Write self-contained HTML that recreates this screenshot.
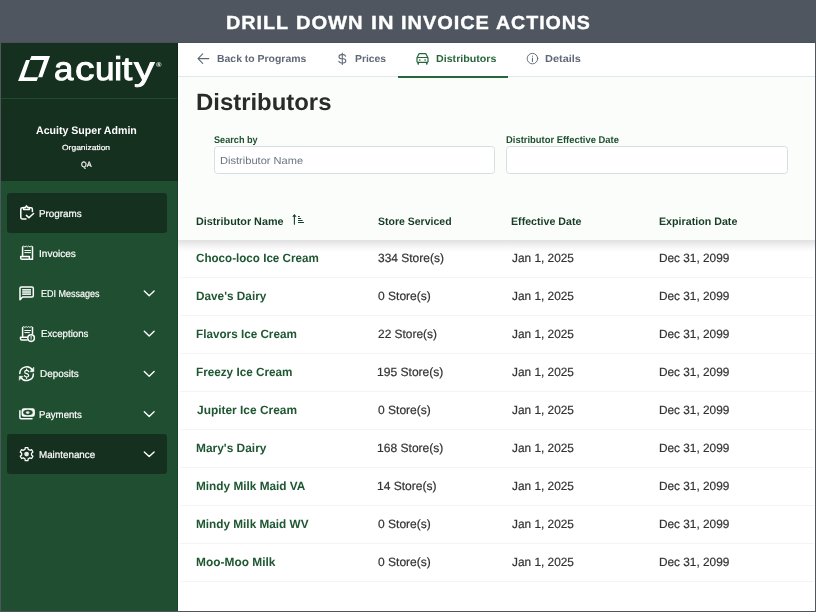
<!DOCTYPE html>
<html><head><meta charset="utf-8"><title>Distributors</title>
<style>
html,body{margin:0;padding:0}
body{width:816px;height:612px;position:relative;overflow:hidden;background:#4f5660;font-family:"Liberation Sans",sans-serif;text-rendering:geometricPrecision}
.b{position:absolute;box-sizing:border-box}
.t{position:absolute;white-space:nowrap;display:inline-block;transform-origin:0 50%}
svg{position:absolute;overflow:visible}
</style></head><body>
<div class="b" style="left:0px;top:0px;width:816px;height:43px;background:#4f5660;"></div>
<div class="b" style="left:0px;top:42px;width:816px;height:1px;background:#4b515b;"></div>
<div class="b" style="left:0px;top:43px;width:816px;height:569px;background:#4f5660;"></div>
<div class="b" style="left:1px;top:43px;width:814px;height:568px;background:#ffffff;"></div>
<div class="b" style="left:180px;top:77px;width:635px;height:164px;background:#fbfdfb;"></div>
<div class="b" style="left:178px;top:76px;width:637px;height:1px;background:#e3e6eb;"></div>
<div class="b" style="left:398px;top:75.5px;width:110px;height:2px;background:#27663b;"></div>
<div class="b" style="left:178px;top:240px;width:637px;height:12px;background:transparent;background:linear-gradient(to bottom,rgba(0,0,0,0.105) 0,rgba(0,0,0,0.10) 2px,rgba(0,0,0,0.06) 5px,rgba(0,0,0,0.028) 8px,rgba(0,0,0,0.006) 11px,rgba(0,0,0,0) 12px);"></div>
<div class="b" style="left:180px;top:277px;width:634px;height:1px;background:#f3f4f3;"></div>
<div class="b" style="left:180px;top:315px;width:634px;height:1px;background:#f3f4f3;"></div>
<div class="b" style="left:180px;top:353px;width:634px;height:1px;background:#f3f4f3;"></div>
<div class="b" style="left:180px;top:391px;width:634px;height:1px;background:#f3f4f3;"></div>
<div class="b" style="left:180px;top:429px;width:634px;height:1px;background:#f3f4f3;"></div>
<div class="b" style="left:180px;top:467px;width:634px;height:1px;background:#f3f4f3;"></div>
<div class="b" style="left:180px;top:505px;width:634px;height:1px;background:#f3f4f3;"></div>
<div class="b" style="left:180px;top:543px;width:634px;height:1px;background:#f3f4f3;"></div>
<div class="b" style="left:180px;top:581px;width:634px;height:1px;background:#f3f4f3;"></div>
<div class="b" style="left:214px;top:146px;width:281px;height:28px;background:#fff;border:1px solid #d9dde2;border-radius:3.5px;"></div>
<div class="b" style="left:506px;top:146px;width:282px;height:28px;background:#fff;border:1px solid #d9dde2;border-radius:3.5px;"></div>
<div class="b" style="left:1px;top:43px;width:177px;height:568px;background:#204e30;"></div>
<div class="b" style="left:1px;top:43px;width:177px;height:138px;background:#163020;"></div>
<div class="b" style="left:1px;top:98px;width:177px;height:1px;background:#1f4a2e;"></div>
<div class="b" style="left:177px;top:43px;width:1px;height:568px;background:#1a4429;"></div>
<div class="b" style="left:177px;top:43px;width:1px;height:138px;background:#0c2a18;"></div>
<div class="b" style="left:7px;top:193px;width:159.5px;height:40px;background:#163020;border-radius:3px;"></div>
<div class="b" style="left:7px;top:434px;width:159.5px;height:40px;background:#163020;border-radius:3px;"></div>
<div class="b" style="left:0;top:0;width:816px;height:612px;will-change:transform">
<span class="t" style="left:226.22px;top:13px;line-height:21px;font-size:18.9px;color:#fff;transform:scaleX(1.0470);font-weight:700;-webkit-text-stroke:0.35px #fff;letter-spacing:0.9px;">DRILL</span>
<span class="t" style="left:296.04px;top:13px;line-height:21px;font-size:18.9px;color:#fff;transform:scaleX(1.0642);font-weight:700;-webkit-text-stroke:0.35px #fff;letter-spacing:0.9px;">DOWN</span>
<span class="t" style="left:370.75px;top:13px;line-height:21px;font-size:18.9px;color:#fff;transform:scaleX(1.1391);font-weight:700;-webkit-text-stroke:0.35px #fff;letter-spacing:0.9px;">IN</span>
<span class="t" style="left:400.95px;top:13px;line-height:21px;font-size:18.9px;color:#fff;transform:scaleX(1.0578);font-weight:700;-webkit-text-stroke:0.35px #fff;letter-spacing:0.9px;">INVOICE</span>
<span class="t" style="left:496.16px;top:13px;line-height:21px;font-size:18.9px;color:#fff;transform:scaleX(1.0392);font-weight:700;-webkit-text-stroke:0.35px #fff;letter-spacing:0.9px;">ACTIONS</span>
<span class="t" style="left:54.36px;top:50px;line-height:37px;font-size:33.0px;color:#fff;transform:scaleX(1.0567);-webkit-text-stroke:0.9px #fff;">a</span>
<span class="t" style="left:75.07px;top:50px;line-height:37px;font-size:33.0px;color:#fff;transform:scaleX(1.1857);-webkit-text-stroke:0.9px #fff;">c</span>
<span class="t" style="left:95.06px;top:50px;line-height:37px;font-size:33.0px;color:#fff;transform:scaleX(1.0643);-webkit-text-stroke:0.9px #fff;">u</span>
<span class="t" style="left:114.41px;top:50px;line-height:37px;font-size:33.0px;color:#fff;transform:scaleX(1.1273);-webkit-text-stroke:0.9px #fff;">i</span>
<span class="t" style="left:122.39px;top:50px;line-height:37px;font-size:33.0px;color:#fff;transform:scaleX(1.1294);-webkit-text-stroke:0.9px #fff;">t</span>
<span class="t" style="left:134.24px;top:50px;line-height:37px;font-size:33.0px;color:#fff;transform:scaleX(1.2369);-webkit-text-stroke:0.9px #fff;">y</span>
<span class="t" style="left:156.20px;top:62px;line-height:7px;font-size:7px;color:#fff;transform:scaleX(1.0000);font-weight:700;">®</span>
<span class="t" style="left:36.16px;top:125px;line-height:12px;font-size:10.9px;color:#fff;transform:scaleX(0.9723);font-weight:700;">Acuity Super Admin</span>
<span class="t" style="left:62.41px;top:143px;line-height:9px;font-size:7.4px;color:#fff;transform:scaleX(1.1467);-webkit-text-stroke:0.2px #fff;">Organization</span>
<span class="t" style="left:81.06px;top:160px;line-height:9px;font-size:7.8px;color:#fff;transform:scaleX(0.9409);-webkit-text-stroke:0.2px #fff;">QA</span>
<span class="t" style="left:39.06px;top:209px;line-height:11px;font-size:10.0px;color:#fff;transform:scaleX(0.9846);-webkit-text-stroke:0.2px #fff;">Programs</span>
<span class="t" style="left:38.80px;top:249px;line-height:11px;font-size:10.0px;color:#fff;transform:scaleX(1.0043);-webkit-text-stroke:0.2px #fff;">Invoices</span>
<span class="t" style="left:40.73px;top:289px;line-height:11px;font-size:10.0px;color:#fff;transform:scaleX(0.8984);-webkit-text-stroke:0.2px #fff;">EDI Messages</span>
<span class="t" style="left:40.67px;top:329px;line-height:11px;font-size:10.0px;color:#fff;transform:scaleX(0.9696);-webkit-text-stroke:0.2px #fff;">Exceptions</span>
<span class="t" style="left:40.15px;top:369px;line-height:11px;font-size:10.0px;color:#fff;transform:scaleX(0.9934);-webkit-text-stroke:0.2px #fff;">Deposits</span>
<span class="t" style="left:39.38px;top:410px;line-height:11px;font-size:10.0px;color:#fff;transform:scaleX(0.9642);-webkit-text-stroke:0.2px #fff;">Payments</span>
<span class="t" style="left:39.26px;top:450px;line-height:11px;font-size:10.0px;color:#fff;transform:scaleX(0.9804);-webkit-text-stroke:0.2px #fff;">Maintenance</span>
<span class="t" style="left:216.58px;top:54px;line-height:11px;font-size:10.2px;color:#5f6876;transform:scaleX(1.0243);font-weight:700;">Back to Programs</span>
<span class="t" style="left:355.24px;top:54px;line-height:11px;font-size:10.2px;color:#5f6876;transform:scaleX(1.0169);font-weight:700;">Prices</span>
<span class="t" style="left:435.81px;top:54px;line-height:11px;font-size:10.2px;color:#27663b;transform:scaleX(1.0467);font-weight:700;">Distributors</span>
<span class="t" style="left:544.99px;top:54px;line-height:11px;font-size:10.2px;color:#5f6876;transform:scaleX(1.0760);font-weight:700;">Details</span>
<span class="t" style="left:196.27px;top:89px;line-height:26px;font-size:23.5px;color:#2a2a2a;transform:scaleX(1.0172);font-weight:700;">Distributors</span>
<span class="t" style="left:213.57px;top:135px;line-height:11px;font-size:9.8px;color:#1f5130;transform:scaleX(0.9333);font-weight:700;">Search by</span>
<span class="t" style="left:506.28px;top:135px;line-height:11px;font-size:9.8px;color:#1f5130;transform:scaleX(0.9605);font-weight:700;">Distributor Effective Date</span>
<span class="t" style="left:219.59px;top:156px;line-height:11px;font-size:10.3px;color:#6b7280;transform:scaleX(1.0763);">Distributor Name</span>
<span class="t" style="left:196.25px;top:216px;line-height:12px;font-size:10.8px;color:#173d26;transform:scaleX(0.9988);font-weight:700;">Distributor Name</span>
<span class="t" style="left:377.96px;top:216px;line-height:12px;font-size:10.8px;color:#173d26;transform:scaleX(0.9726);font-weight:700;">Store Serviced</span>
<span class="t" style="left:511.06px;top:216px;line-height:12px;font-size:10.8px;color:#173d26;transform:scaleX(0.9851);font-weight:700;">Effective Date</span>
<span class="t" style="left:659.36px;top:216px;line-height:12px;font-size:10.8px;color:#173d26;transform:scaleX(0.9891);font-weight:700;">Expiration Date</span>
<span class="t" style="left:196.32px;top:251px;line-height:14px;font-size:12.0px;color:#1f5732;transform:scaleX(0.9689);font-weight:700;">Choco-loco Ice Cream</span>
<span class="t" style="left:377.80px;top:251px;line-height:14px;font-size:12.0px;color:#333333;transform:scaleX(0.9977);-webkit-text-stroke:0.2px #333333;">334 Store(s)</span>
<span class="t" style="left:511.75px;top:251px;line-height:14px;font-size:12.0px;color:#333333;transform:scaleX(0.9871);-webkit-text-stroke:0.2px #333333;">Jan 1, 2025</span>
<span class="t" style="left:659.12px;top:251px;line-height:14px;font-size:12.0px;color:#333333;transform:scaleX(0.9849);-webkit-text-stroke:0.2px #333333;">Dec 31, 2099</span>
<span class="t" style="left:196.06px;top:289px;line-height:14px;font-size:12.0px;color:#1f5732;transform:scaleX(0.9823);font-weight:700;">Dave&#x27;s Dairy</span>
<span class="t" style="left:377.80px;top:289px;line-height:14px;font-size:12.0px;color:#333333;transform:scaleX(1.0019);-webkit-text-stroke:0.2px #333333;">0 Store(s)</span>
<span class="t" style="left:511.75px;top:289px;line-height:14px;font-size:12.0px;color:#333333;transform:scaleX(0.9871);-webkit-text-stroke:0.2px #333333;">Jan 1, 2025</span>
<span class="t" style="left:659.12px;top:289px;line-height:14px;font-size:12.0px;color:#333333;transform:scaleX(0.9849);-webkit-text-stroke:0.2px #333333;">Dec 31, 2099</span>
<span class="t" style="left:196.07px;top:327px;line-height:14px;font-size:12.0px;color:#1f5732;transform:scaleX(0.9755);font-weight:700;">Flavors Ice Cream</span>
<span class="t" style="left:377.80px;top:327px;line-height:14px;font-size:12.0px;color:#333333;transform:scaleX(0.9940);-webkit-text-stroke:0.2px #333333;">22 Store(s)</span>
<span class="t" style="left:511.75px;top:327px;line-height:14px;font-size:12.0px;color:#333333;transform:scaleX(0.9871);-webkit-text-stroke:0.2px #333333;">Jan 1, 2025</span>
<span class="t" style="left:659.12px;top:327px;line-height:14px;font-size:12.0px;color:#333333;transform:scaleX(0.9849);-webkit-text-stroke:0.2px #333333;">Dec 31, 2099</span>
<span class="t" style="left:196.07px;top:365px;line-height:14px;font-size:12.0px;color:#1f5732;transform:scaleX(0.9763);font-weight:700;">Freezy Ice Cream</span>
<span class="t" style="left:377.29px;top:365px;line-height:14px;font-size:12.0px;color:#333333;transform:scaleX(1.0054);-webkit-text-stroke:0.2px #333333;">195 Store(s)</span>
<span class="t" style="left:511.75px;top:365px;line-height:14px;font-size:12.0px;color:#333333;transform:scaleX(0.9871);-webkit-text-stroke:0.2px #333333;">Jan 1, 2025</span>
<span class="t" style="left:659.12px;top:365px;line-height:14px;font-size:12.0px;color:#333333;transform:scaleX(0.9849);-webkit-text-stroke:0.2px #333333;">Dec 31, 2099</span>
<span class="t" style="left:196.55px;top:403px;line-height:14px;font-size:12.0px;color:#1f5732;transform:scaleX(0.9935);font-weight:700;">Jupiter Ice Cream</span>
<span class="t" style="left:377.80px;top:403px;line-height:14px;font-size:12.0px;color:#333333;transform:scaleX(1.0019);-webkit-text-stroke:0.2px #333333;">0 Store(s)</span>
<span class="t" style="left:511.75px;top:403px;line-height:14px;font-size:12.0px;color:#333333;transform:scaleX(0.9871);-webkit-text-stroke:0.2px #333333;">Jan 1, 2025</span>
<span class="t" style="left:659.12px;top:403px;line-height:14px;font-size:12.0px;color:#333333;transform:scaleX(0.9849);-webkit-text-stroke:0.2px #333333;">Dec 31, 2099</span>
<span class="t" style="left:196.06px;top:441px;line-height:14px;font-size:12.0px;color:#1f5732;transform:scaleX(0.9929);font-weight:700;">Mary&#x27;s Dairy</span>
<span class="t" style="left:377.29px;top:441px;line-height:14px;font-size:12.0px;color:#333333;transform:scaleX(1.0054);-webkit-text-stroke:0.2px #333333;">168 Store(s)</span>
<span class="t" style="left:511.75px;top:441px;line-height:14px;font-size:12.0px;color:#333333;transform:scaleX(0.9871);-webkit-text-stroke:0.2px #333333;">Jan 1, 2025</span>
<span class="t" style="left:659.12px;top:441px;line-height:14px;font-size:12.0px;color:#333333;transform:scaleX(0.9849);-webkit-text-stroke:0.2px #333333;">Dec 31, 2099</span>
<span class="t" style="left:196.06px;top:479px;line-height:14px;font-size:12.0px;color:#1f5732;transform:scaleX(0.9845);font-weight:700;">Mindy Milk Maid VA</span>
<span class="t" style="left:377.30px;top:479px;line-height:14px;font-size:12.0px;color:#333333;transform:scaleX(1.0026);-webkit-text-stroke:0.2px #333333;">14 Store(s)</span>
<span class="t" style="left:511.75px;top:479px;line-height:14px;font-size:12.0px;color:#333333;transform:scaleX(0.9871);-webkit-text-stroke:0.2px #333333;">Jan 1, 2025</span>
<span class="t" style="left:659.12px;top:479px;line-height:14px;font-size:12.0px;color:#333333;transform:scaleX(0.9849);-webkit-text-stroke:0.2px #333333;">Dec 31, 2099</span>
<span class="t" style="left:196.06px;top:517px;line-height:14px;font-size:12.0px;color:#1f5732;transform:scaleX(0.9811);font-weight:700;">Mindy Milk Maid WV</span>
<span class="t" style="left:377.80px;top:517px;line-height:14px;font-size:12.0px;color:#333333;transform:scaleX(1.0019);-webkit-text-stroke:0.2px #333333;">0 Store(s)</span>
<span class="t" style="left:511.75px;top:517px;line-height:14px;font-size:12.0px;color:#333333;transform:scaleX(0.9871);-webkit-text-stroke:0.2px #333333;">Jan 1, 2025</span>
<span class="t" style="left:659.12px;top:517px;line-height:14px;font-size:12.0px;color:#333333;transform:scaleX(0.9849);-webkit-text-stroke:0.2px #333333;">Dec 31, 2099</span>
<span class="t" style="left:196.06px;top:555px;line-height:14px;font-size:12.0px;color:#1f5732;transform:scaleX(0.9931);font-weight:700;">Moo-Moo Milk</span>
<span class="t" style="left:377.80px;top:555px;line-height:14px;font-size:12.0px;color:#333333;transform:scaleX(1.0019);-webkit-text-stroke:0.2px #333333;">0 Store(s)</span>
<span class="t" style="left:511.75px;top:555px;line-height:14px;font-size:12.0px;color:#333333;transform:scaleX(0.9871);-webkit-text-stroke:0.2px #333333;">Jan 1, 2025</span>
<span class="t" style="left:659.12px;top:555px;line-height:14px;font-size:12.0px;color:#333333;transform:scaleX(0.9849);-webkit-text-stroke:0.2px #333333;">Dec 31, 2099</span>
</div>
<svg width="816" height="612" viewBox="0 0 816 612" style="left:0;top:0" fill="none" stroke-linecap="round" stroke-linejoin="round"><path fill="#ffffff" fill-rule="evenodd" stroke="none" d="M31.4 55.9H50L42.3 77.2H38.1L36.7 80.9H18.1L26 60H29.9Z M29.9 60H44L38.1 77.2H24Z"/><g stroke="#ffffff" stroke-width="1.5"><path d="M26 219H22.2Q20.8 219 20.8 217.6V209.2Q20.8 207.8 22.2 207.8H23.4"/><path d="M29.6 207.8H31Q32.4 207.8 32.4 209.2V211.6"/><path d="M23.6 209.6V207.6H25.3L26.5 205.8L27.7 207.6H29.4V209.6Z"/><path d="M26.4 215.4L28.9 217.8L33.6 213.5"/><path d="M22.6 256V246.9M32.5 246.9V259.2H29.6"/><path stroke-width="1" d="M22.6 246.9l0.825 -0.8l0.825 0.8l0.825 -0.8l0.825 0.8l0.825 -0.8l0.825 0.8l0.825 -0.8l0.825 0.8l0.825 -0.8l0.825 0.8l0.825 -0.8l0.825 0.8"/><path d="M20.7 256.4H29.4V258Q29.4 259.3 28 259.3H22Q20.7 259.3 20.7 258Z"/><path stroke-width="1" d="M24.8 250.5H30.6M24.8 252.6H30.6"/><path d="M20 299.8V288.2Q20 286.9 21.3 286.9H32Q33.3 286.9 33.3 288.2V295.8Q33.3 297.1 32 297.1H22.6Z"/><path stroke-width="1" d="M22.6 289.7H30.6M22.6 292H30.6M22.6 294.3H30.6"/><rect x="22.2" y="289.3" width="8.8" height="5.5" fill="#ffffff" fill-opacity="0.55" stroke="none"/><path d="M22.6 336.6V327.4M32.5 327.4V333.8"/><path stroke-width="1" d="M22.6 327.4l0.825 -0.8l0.825 0.8l0.825 -0.8l0.825 0.8l0.825 -0.8l0.825 0.8l0.825 -0.8l0.825 0.8l0.825 -0.8l0.825 0.8l0.825 -0.8l0.825 0.8"/><path d="M27 340H21.8Q20.5 340 20.5 338.7V337.2H27.2"/><path stroke-width="1" d="M24.8 330.5H30.6M24.8 332.6H29.4"/><circle cx="31.1" cy="338.1" r="3.3" fill="#204e30"/><path stroke-width="1" d="M31.1 336.3V338.4M31.1 339.8V339.9"/><path d="M19.80 373.46A6.8 6.8 0 0 1 32.37 370.10"/><path d="M33.40 373.94A6.8 6.8 0 0 1 20.83 377.30"/><path fill="#ffffff" stroke-width="0.6" d="M33.8 367.6V371.7H30.2Z"/><path fill="#ffffff" stroke-width="0.6" d="M19.3 379.9V376.3H22.7Z"/><path stroke-width="1.2" d="M28.6 371.6Q28.4 370.4 26.6 370.4Q24.7 370.4 24.7 371.9Q24.7 373.2 26.6 373.6Q28.7 374.1 28.7 375.5Q28.7 377 26.6 377Q24.7 377 24.5 375.7M26.6 369.2V370.4M26.6 377V378.3"/><rect x="22.3" y="409" width="11.8" height="7" rx="1.6" fill="#ffffff" fill-opacity="0.88"/><path d="M19.9 410.8V417.6Q19.9 418.8 21.1 418.8H32"/><ellipse cx="27.9" cy="412.5" rx="4.7" ry="2.7" fill="#204e30" stroke="none"/><ellipse cx="27.7" cy="412.6" rx="1.8" ry="1.4" fill="#ffffff" fill-opacity="0.85" stroke="none"/></g><path d="M24.98 449.37L25.27 447.53L27.93 447.53L28.22 449.37L29.89 450.33L31.62 449.66L32.95 451.97L31.51 453.14L31.51 455.06L32.95 456.23L31.62 458.54L29.89 457.87L28.22 458.83L27.93 460.67L25.27 460.67L24.98 458.83L23.31 457.87L21.58 458.54L20.25 456.23L21.69 455.06L21.69 453.14L20.25 451.97L21.58 449.66L23.31 450.33Z" stroke="#ffffff" stroke-width="1.25"/><circle cx="26.6" cy="454.1" r="2.4" fill="#ffffff" fill-opacity="0.9"/><path d="M144.3 291.10L149.2 295.80L154.1 291.10" stroke="#ffffff" stroke-width="1.4"/><path d="M144.3 331.30L149.2 336.00L154.1 331.30" stroke="#ffffff" stroke-width="1.4"/><path d="M144.3 371.50L149.2 376.20L154.1 371.50" stroke="#ffffff" stroke-width="1.4"/><path d="M144.3 411.70L149.2 416.40L154.1 411.70" stroke="#ffffff" stroke-width="1.4"/><path d="M144.3 451.90L149.2 456.60L154.1 451.90" stroke="#ffffff" stroke-width="1.4"/><path d="M198 58.6H208.8M202.7 53.9L198 58.6L202.7 63.3" stroke="#5f6876" stroke-width="1.1"/><path d="M345.6 56.2Q345 54.6 343.3 54.6H341.4Q339 54.6 339 56.7Q339 58.7 341.4 58.7H343.2Q345.8 58.7 345.8 60.8Q345.8 62.9 343.2 62.9H341.3Q339.4 62.9 338.8 61.3M342.3 53.1V64.4" stroke="#5f6876" stroke-width="1.05"/><g stroke="#27663b" stroke-width="1.2"><path d="M417.2 57.6L418.6 54.4Q418.9 53.7 419.7 53.7H425.2Q426 53.7 426.3 54.4L427.7 57.6"/><rect x="417" y="57.5" width="11" height="4.9" rx="0.8"/><path stroke-width="1.6" d="M418.2 62.6V64M426.8 62.6V64"/><path stroke-width="1.5" d="M419.7 60H419.9M425 60H425.2"/></g><circle cx="532.45" cy="58.6" r="5.25" stroke="#5f6876" stroke-width="0.95"/><path d="M532.45 58V61.4M532.45 56.1V56.2" stroke="#5f6876" stroke-width="1.05"/><path d="M294.4 215.5V224.2" stroke="#17402a" stroke-width="1.1"/><path d="M294.4 214.1L296.6 216.8H292.2Z" fill="#17402a" stroke="none"/><path d="M298 216.5H299.8M298 218.5H301.1M298 220.5H302.6M298 222.5H303.9" stroke="#17402a" stroke-width="1.05" stroke-linecap="butt"/></svg>
</body></html>
